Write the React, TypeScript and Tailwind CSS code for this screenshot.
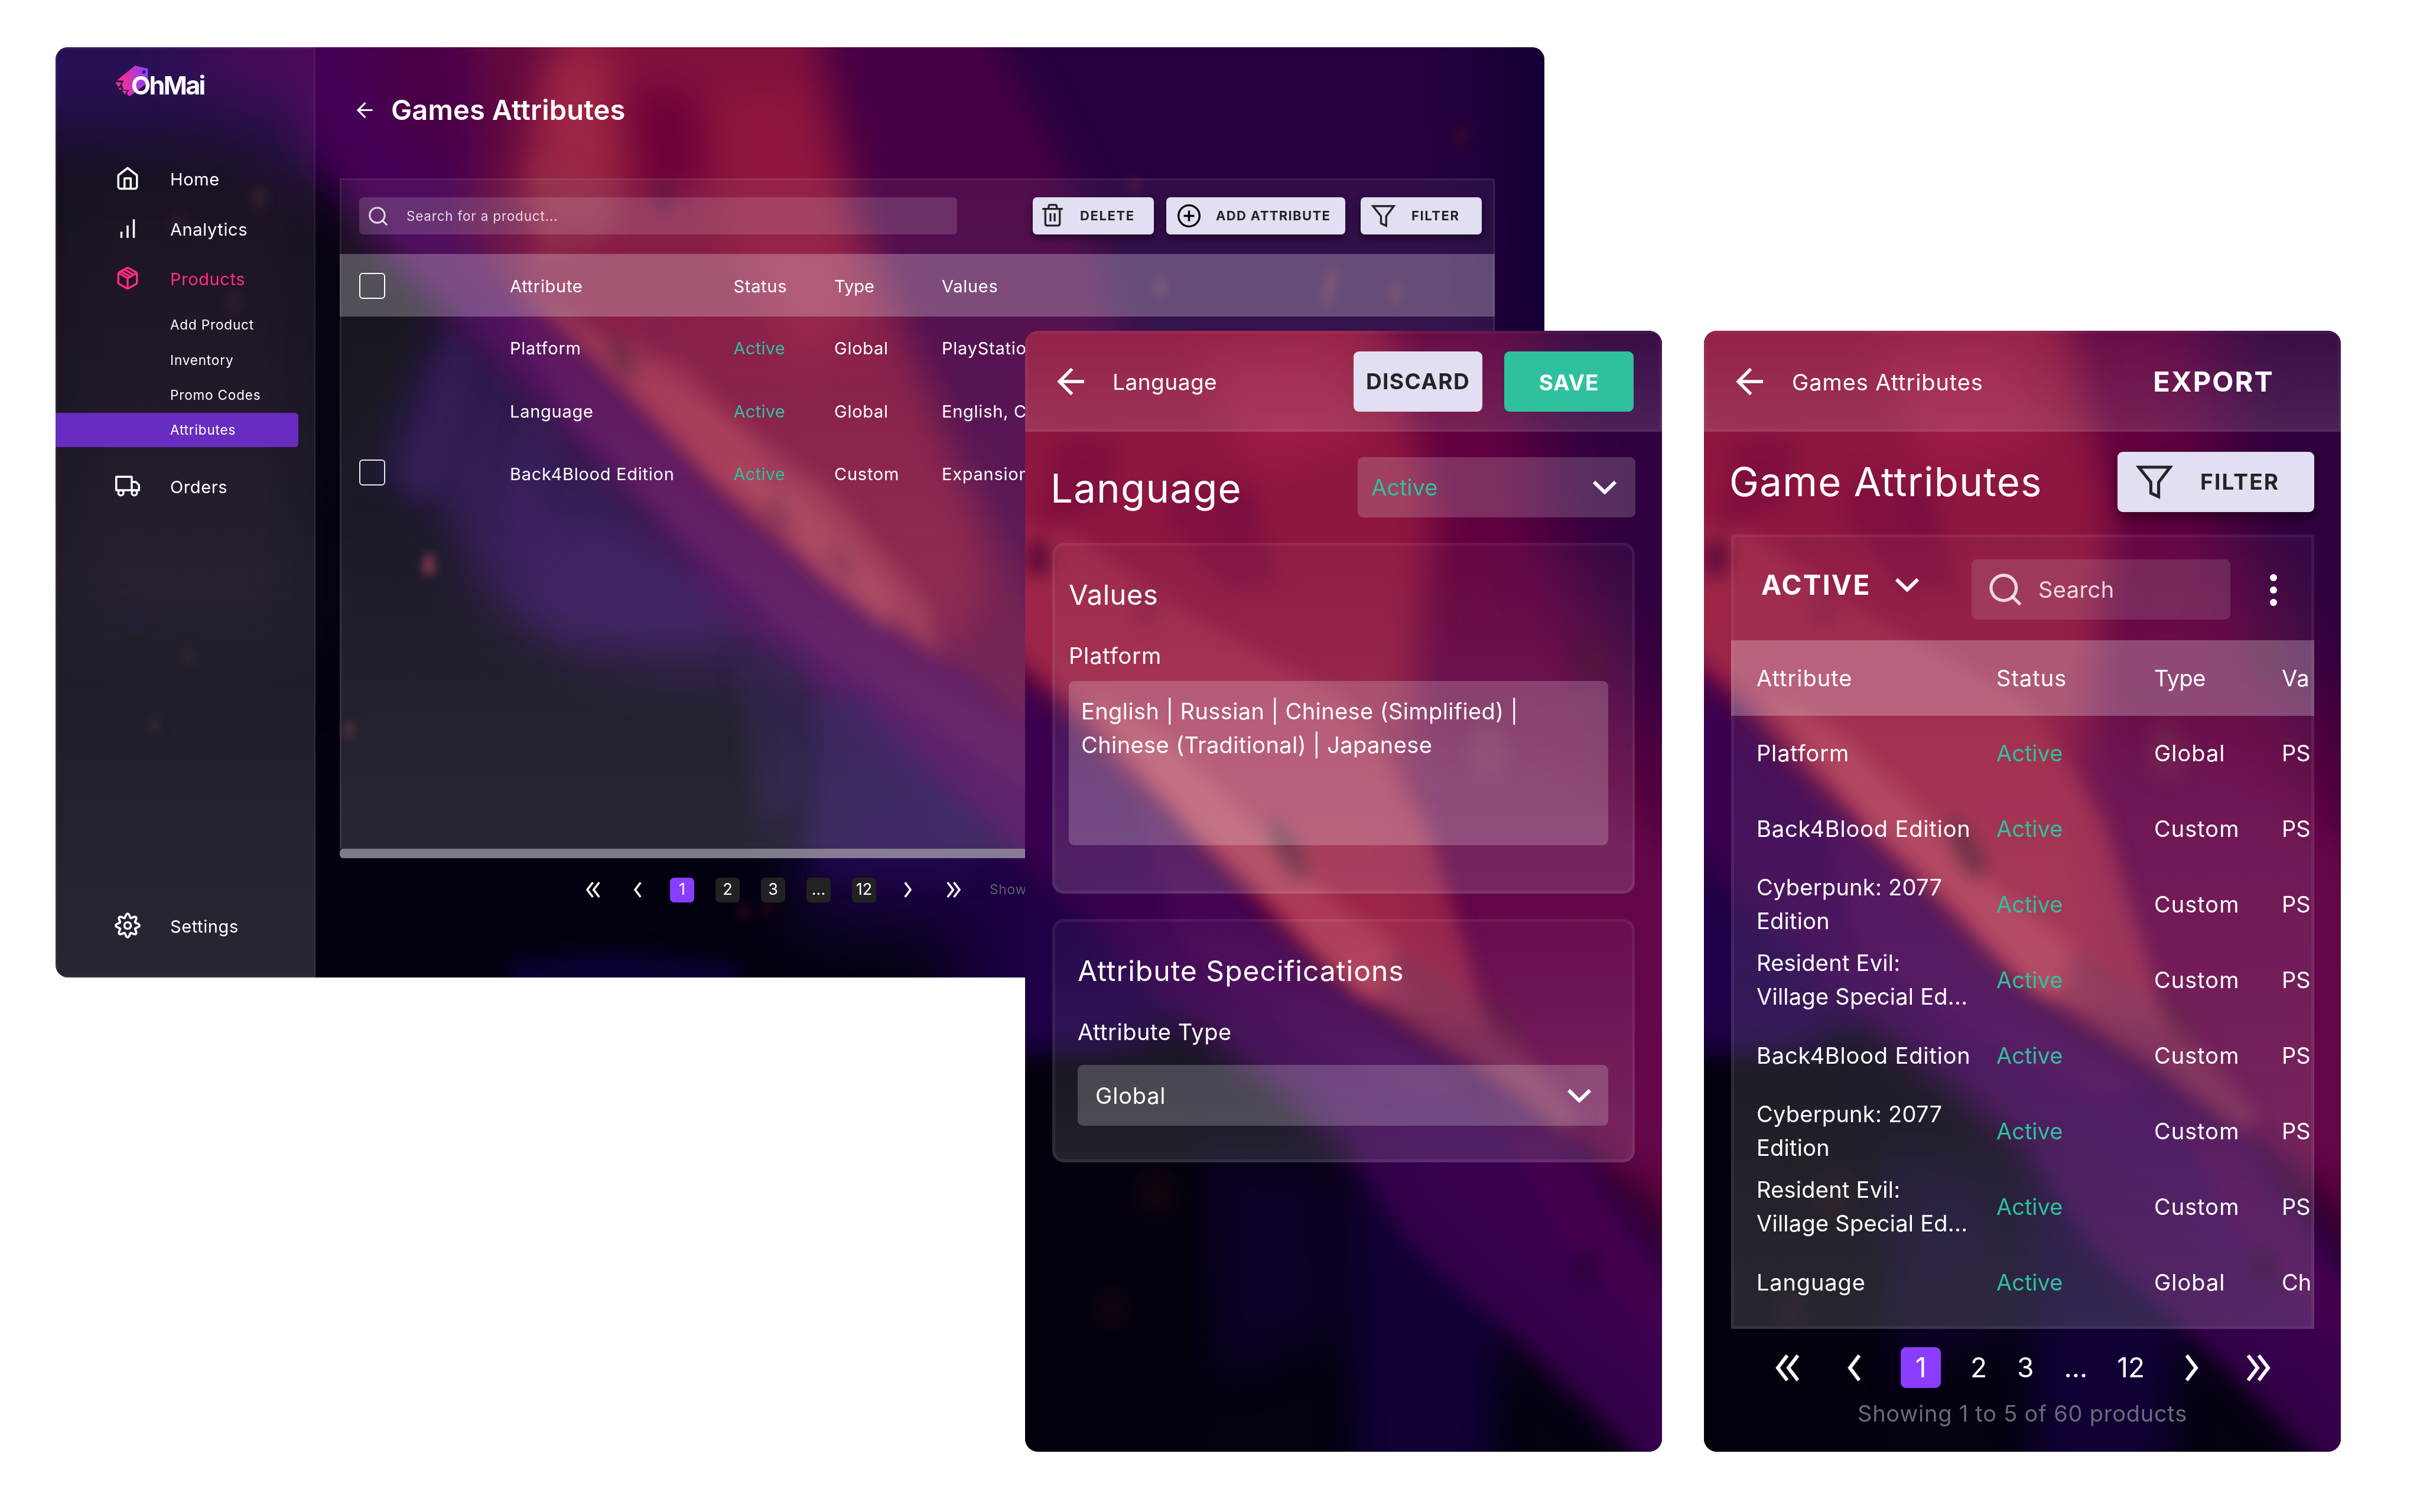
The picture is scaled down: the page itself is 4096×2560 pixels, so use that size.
import React from "react";

type TProps = { className?: string; children: React.ReactNode };

function T({ className = "", children }: TProps) {
  return <span className={"whitespace-nowrap " + className}>{children}</span>;
}

/* ---------- icons ---------- */

type IconProps = { className?: string; sw?: number };

function Line({ className = "", sw = 2, children }: IconProps & { children: React.ReactNode }) {
  return (
    <svg viewBox="0 0 24 24" fill="none" stroke="currentColor" strokeWidth={sw} strokeLinecap="round" strokeLinejoin="round" className={"shrink-0 " + className}>
      {children}
    </svg>
  );
}

const HomeIcon = (p: IconProps) => (
  <Line {...p}>
    <path d="M3 9l9-7 9 7v11a2 2 0 0 1-2 2H5a2 2 0 0 1-2-2z" />
    <path d="M9 22V12h6v10" />
  </Line>
);
const BarsIcon = (p: IconProps) => (
  <Line {...p}>
    <path strokeLinecap="butt" d="M6 21v-6M12 21V9M18 21V3" />
  </Line>
);
const PackageIcon = (p: IconProps) => (
  <Line {...p}>
    <path d="M21 16V8a2 2 0 0 0-1-1.73l-7-4a2 2 0 0 0-2 0l-7 4A2 2 0 0 0 3 8v8a2 2 0 0 0 1 1.73l7 4a2 2 0 0 0 2 0l7-4A2 2 0 0 0 21 16z" />
    <path d="M3.3 7L12 12l8.7-5M12 22V12M6 5.6l8.8 5M9.3 4l8.6 4.6" />
  </Line>
);
const TruckIcon = (p: IconProps) => (
  <Line {...p}>
    <path d="M1 3h15v13H1zM16 8h4l3 3v5h-7z" />
    <circle cx="5.5" cy="18.5" r="2.5" />
    <circle cx="18.5" cy="18.5" r="2.5" />
  </Line>
);
const gearPath =
  Array.from({ length: 96 }, (_, i) => {
    const a = (i / 96) * Math.PI * 2;
    const r = 9.2 + 1.75 * Math.cos(8 * a);
    return `${i ? "L" : "M"}${(12 + r * Math.cos(a)).toFixed(2)} ${(12 + r * Math.sin(a)).toFixed(2)}`;
  }).join("") + "Z";
const GearIcon = (p: IconProps) => (
  <Line {...p}>
    <path d={gearPath} />
    <circle cx="12" cy="12" r="3" />
  </Line>
);
const SearchIcon = (p: IconProps) => (
  <Line {...p}>
    <circle cx="11" cy="11" r="8" />
    <path d="M21 21l-4.35-4.35" />
  </Line>
);
const ArrowIcon = ({ className = "", sw = 3.3 }: IconProps) => (
  <svg viewBox="0 0 28 28" fill="none" stroke="currentColor" strokeWidth={sw} className={"shrink-0 " + className}>
    <path d="M28 14H2M15.5 1L2.5 14l13 13" />
  </svg>
);
const TrashIcon = ({ className = "" }: IconProps) => (
  <svg viewBox="90 70 148 166" fill="none" stroke="currentColor" strokeWidth="14" className={"shrink-0 " + className}>
    <path d="M90 107H238M136 104V90q0-12 12-12h34q12 0 12 12v14M112 110V214q0 13 13 13h78q13 0 13-13V110M149 138V197M179 138V197" />
  </svg>
);
const PlusCircleIcon = ({ className = "" }: IconProps) => (
  <svg viewBox="0 0 162 162" fill="none" stroke="currentColor" strokeWidth="14" className={"shrink-0 " + className}>
    <circle cx="81" cy="81" r="74" />
    <path d="M81 44V118M44 81H118" />
  </svg>
);
const FunnelIcon = ({ className = "", sw = 5 }: IconProps) => (
  <svg viewBox="0 0 60 56" fill="none" stroke="currentColor" strokeWidth={sw} className={"shrink-0 " + className}>
    <path d="M4 3H56L37 28V52L24 46V28Z" />
  </svg>
);
const ChevronDown = ({ className = "" }: IconProps) => (
  <svg viewBox="0 0 42 24" fill="none" stroke="currentColor" strokeWidth="6" className={"shrink-0 " + className}>
    <path d="M3 3L21 20.500L39 3" />
  </svg>
);
const Angle = ({ className = "", double = false, flip = false }: { className?: string; double?: boolean; flip?: boolean }) => (
  <svg viewBox={double ? "0 0 42 52" : "0 0 24 52"} fill="none" stroke="currentColor" strokeWidth="6" className={"shrink-0 " + (flip ? "-scale-x-100 " : "") + className}>
    <path d="M21 5L5 26L21 47" />
    {double && <path d="M39 5L23 26L39 47" />}
  </svg>
);

function Logo() {
  return (
    <div className="relative ml-[101px] mt-[31px] h-[52px] w-[153px]">
      <svg viewBox="72 78 644 220" className="absolute inset-0 h-[52px] w-[153px]">
        <defs>
          <linearGradient id="fish" x1="72" x2="305" y1="0" y2="0" gradientUnits="userSpaceOnUse">
            <stop offset="0.1" stopColor="#ff2d86" />
            <stop offset="1" stopColor="#8b3dff" />
          </linearGradient>
        </defs>
        <path
          fill="url(#fish)"
          fillRule="evenodd"
          d="M213 78L305 100V200L172 299L152 280L170 252L130 252L118 214L132 186L82 184ZM276 112a12 12 0 1 0 .1 0ZM72 198L118 200L94 234ZM94 250L106 232L118 252ZM120 258L156 258L138 286Z"
        />
      </svg>
      <span className="absolute left-[27px] top-[4px] whitespace-nowrap font-[Inter] text-[43px] font-bold leading-[58px] tracking-[-2.600px]">
        OhMai
      </span>
    </div>
  );
}

/* ---------- backdrops ---------- */

function Blurs({ id }: { id: string }) {
  return (
    <defs>
      {[3, 6, 12, 24].map((s) => (
        <filter key={s} id={`${id}${s}`} x="-50%" y="-50%" width="200%" height="200%" colorInterpolationFilters="sRGB">
          <feGaussianBlur stdDeviation={s} />
        </filter>
      ))}
    </defs>
  );
}

function DesktopBackdrop() {
  return (
    <svg viewBox="36 30.5 965 603" preserveAspectRatio="none" className="absolute inset-0 h-full w-full">
      <Blurs id="d" />
      <rect x="36" y="30" width="966" height="604" fill="#03010f" />
      <g filter="url(#d24)">
        <path d="M-20 -20H330V110L230 130L150 85L-20 85Z" fill="#200650" />
        <path d="M130 -20H330V130L240 120L180 60L130 60Z" fill="#430052" />
        <path d="M480 -20H1060V400H900L760 660L560 430Z" fill="#27003f" />
        <path d="M960 -20H1060V300H970Z" fill="#150036" />
        <path d="M36 110H205V420H36Z" fill="#0f0616" />
        <path d="M520 430L640 500L760 560V600H520Z" fill="#1b0545" />
        <path d="M620 540L760 560V680H620Z" fill="#1c0044" />
        <path d="M290 300H380L500 400L520 430L420 430L320 390Z" fill="#2a0852" />
      </g>
      <g filter="url(#d12)">
        <path d="M195 -20H300L345 100L400 200L470 290L560 360L700 440V580L664 556L566 480L466 394L416 332L363 280L280 195L238 154L205 100Z" fill="#460056" />
        <path d="M230 -20H300L300 130L250 80Z" fill="#4a0048" />
        <path d="M300 -20H500L560 60L640 190L720 300V520L664 470L616 433L533 375L465 318L374 222L336 192L300 150L310 100Z" fill="#62083f" />
        <path d="M365 -20H520L560 120L620 240L640 380L616 425L533 370L465 312L380 222L335 188L345 120Z" fill="#80103c" />
        <path d="M520 -20H620L700 130L760 330L700 440L620 300L560 150Z" fill="#480044" />
        <path d="M355 30H395L405 110L380 150L335 130Z" fill="#9c2443" />
        <path d="M405 60H450L455 118L420 125Z" fill="#6c0038" />
        <path d="M465 60H520L560 200L520 240L470 150Z" fill="#90163f" />
        <path d="M210 105L238 160L280 205L262 250L215 330Z" fill="#090510" />
        <path d="M282 210L325 250L362 290L410 340L400 330L340 400L300 330L245 310Z" fill="#1c0742" />
        <path d="M318 322L345 322L400 345L460 395L468 412L420 408L375 418L350 405L335 370Z" fill="#2c0a56" opacity="0.7" />
      </g>
      <g filter="url(#d6)">
        <path d="M337 186L372 205L420 240L480 275L540 320L600 390L610 425L533 372L465 314L374 222Z" fill="#9e304c" opacity="0.75" />
        <path d="M385 215L440 235L490 285L500 335L462 310Z" fill="#a5304e" opacity="0.6" />
        <path d="M345 100L400 120L400 150L350 170Z" fill="#8c2c48" opacity="0.5" />
        <path d="M470 300L520 320L580 385L575 408L533 374Z" fill="#a83a54" opacity="0.7" />
        <path d="M330 200L374 230L462 328L533 386L616 442L680 490V520L600 468L520 415L440 345L370 272Z" fill="#550a54" opacity="0.75" />
        <path d="M290 215L310 230L280 320L262 320Z" fill="#250a48" opacity="0.6" />
        <path d="M340 260L362 285L345 340L325 330Z" fill="#2c0a50" opacity="0.5" />
        <path d="M476 425H520V520L490 535Z" fill="#1b0a40" opacity="0.5" />
        <path d="M526 450H560L640 540V570H526Z" fill="#200a50" opacity="0.5" />
        <path d="M330 622L400 616L480 624V645H330Z" fill="#0c0030" />
        <ellipse cx="403" cy="232" rx="5" ry="15" transform="rotate(-28 403 232)" fill="#521a34" opacity="0.9" />
        <ellipse cx="430" cy="126" rx="6" ry="12" fill="#5c0a38" />
        <ellipse cx="504" cy="334" rx="4" ry="12" transform="rotate(-30 504 334)" fill="#6a2040" />
        <ellipse cx="545" cy="365" rx="4" ry="12" transform="rotate(-30 545 365)" fill="#6a1c44" opacity="0.8" />
        <ellipse cx="426" cy="222" rx="8" ry="10" fill="#74123f" opacity="0.8" />
      </g>
      <g filter="url(#d3)">
        <ellipse cx="278" cy="366" rx="4" ry="7" fill="#6d2236" />
        <ellipse cx="168" cy="128" rx="5" ry="8" fill="#241020" />
        <ellipse cx="115" cy="145" rx="5" ry="7" fill="#1c0c1c" />
        <ellipse cx="152" cy="195" rx="5" ry="7" fill="#1c0d1c" />
        <ellipse cx="88" cy="400" rx="5" ry="9" fill="#0c0420" />
        <ellipse cx="122" cy="425" rx="4" ry="6" fill="#160812" />
        <ellipse cx="100" cy="470" rx="4" ry="6" fill="#160812" />
        <ellipse cx="226" cy="473" rx="4" ry="6" fill="#2c0e1a" />
        <ellipse cx="482" cy="590" rx="4" ry="6" fill="#240414" />
        <ellipse cx="497" cy="588" rx="3" ry="7" fill="#240414" />
        <ellipse cx="862" cy="186" rx="4" ry="13" transform="rotate(10 862 186)" fill="#481038" />
        <ellipse cx="905" cy="190" rx="4" ry="8" fill="#400c38" />
        <ellipse cx="752" cy="186" rx="5" ry="7" fill="#421040" />
        <ellipse cx="947" cy="88" rx="4" ry="8" transform="rotate(25 947 88)" fill="#340630" />
        <ellipse cx="735" cy="120" rx="5" ry="6" fill="#380a3a" />
      </g>
    </svg>
  );
}

function PhoneBackdrop({ id }: { id: string }) {
  return (
    <svg viewBox="0 0 413 727" preserveAspectRatio="none" className="absolute inset-0 h-full w-full">
      <Blurs id={id} />
      <rect width="413" height="727" fill="#040110" />
      <g filter={`url(#${id}24)`}>
        <path d="M-40 -40H460V640L350 520L220 440L80 310L-40 200Z" fill="#62003f" />
        <path d="M325 -60H480V330L400 265L340 130Z" fill="#30003e" />
        <path d="M400 250H480V460L420 440Z" fill="#420040" />
      </g>
      <g filter={`url(#${id}12)`}>
        <path d="M-30 200L28 246L106 328L189 418L295 481L350 520L385 560L450 640V790L378 706L308 640L253 592L214 536L156 486L100 446L45 388L-30 322Z" fill="#3a0050" />
        <path d="M-30 330L50 392L100 448L60 470L-30 470Z" fill="#1f0048" />
        <path d="M210 535L250 592L308 642L300 760H215Z" fill="#100034" />
        <path d="M115 530L200 545L205 650L125 680Z" fill="#0c0024" />
        <path d="M-30 -30H230L265 120L250 250L310 370L290 470L189 410L106 322L64 280L28 240L-30 200Z" fill="#8e1640" />
        <path d="M110 10L200 0L220 70L150 90Z" fill="#9c1c44" />
        <path d="M240 260L330 270L430 340V560L370 530L300 478L260 430Z" fill="#640648" />
      </g>
      <g filter={`url(#${id}6)`}>
        <path d="M-10 125L30 130L100 180L210 240L260 320L285 400L300 455L220 432L150 360L64 280L28 240L-10 205Z" fill="#a22a4a" opacity="0.75" />
        <path d="M40 235L90 262L140 310L190 360L240 400L255 440L215 430L148 360L106 322Z" fill="#b03e58" opacity="0.85" />
        <path d="M240 400L300 440L360 510L350 520L290 475L230 435Z" fill="#7e2850" opacity="0.7" />
        <path d="M100 90L150 110L165 165L130 170L90 120Z" fill="#7c0e3e" opacity="0.7" />
        <path d="M20 70H60L55 110L10 130Z" fill="#760a3c" opacity="0.6" />
        <path d="M70 300L145 372L215 440L290 490L260 500L180 460L100 400Z" fill="#4a0656" opacity="0.7" />
        <path d="M214 530L240 520L320 590L413 690V740L378 706L308 640L253 592Z" fill="#34004a" opacity="0.7" />
        <path d="M300 500L350 530L413 620V660L350 590Z" fill="#4c004c" opacity="0.6" />
        <path d="M-10 475H90L110 540L105 760H-10Z" fill="#04010c" opacity="0.9" />
        <ellipse cx="170" cy="336" rx="7" ry="22" transform="rotate(-28 170 336)" fill="#5c2238" />
        <ellipse cx="308" cy="448" rx="7" ry="20" transform="rotate(-38 308 448)" fill="#561038" opacity="0.65" />
        <ellipse cx="8" cy="147" rx="8" ry="13" fill="#5c0a38" />
        <ellipse cx="300" cy="272" rx="12" ry="20" fill="#6a1a44" opacity="0.6" />
        <ellipse cx="365" cy="212" rx="12" ry="16" fill="#42082e" opacity="0.6" />
        <ellipse cx="78" cy="180" rx="9" ry="14" fill="#8a1e42" opacity="0.8" />
        <ellipse cx="140" cy="115" rx="8" ry="18" fill="#760e40" opacity="0.7" />
        <ellipse cx="56" cy="634" rx="7" ry="11" fill="#140410" />
        <ellipse cx="85" cy="560" rx="12" ry="14" fill="#10040e" />
        <ellipse cx="364" cy="608" rx="11" ry="14" fill="#2c0038" opacity="0.7" />
      </g>
    </svg>
  );
}

/* ---------- desktop window ---------- */

const tableRows = [
  { name: "Platform", type: "Global", values: "PlayStation", box: false },
  { name: "Language", type: "Global", values: "English, Ch", box: false },
  { name: "Back4Blood Edition", type: "Custom", values: "Expansion", box: true },
];

function NavRow({ icon, label, className = "" }: { icon: React.ReactNode; label: string; className?: string }) {
  return (
    <div className={"flex h-[84.400px] shrink-0 items-center gap-[51px] pl-[101px] " + className}>
      {icon}
      <T className="pt-[4px] text-[29px] leading-[40px] tracking-[0.600px]">{label}</T>
    </div>
  );
}

const subRow = "flex h-[59.600px] items-center pl-[194px]";

function Sidebar() {
  return (
    <aside className="flex w-[440px] shrink-0 flex-col border-[3px] border-white/[0.05] bg-linear-to-b from-white/[0.04] to-white/[0.150] bg-origin-border">
      <div className="-ml-[3px] -mt-[3px] flex h-[180px] shrink-0">
        <Logo />
      </div>
      <nav className="-ml-[3px] flex flex-col">
        <NavRow icon={<HomeIcon className="size-[42px]" />} label="Home" />
        <NavRow icon={<BarsIcon className="size-[42px]" />} label="Analytics" />
        <NavRow icon={<PackageIcon className="size-[42px]" />} label="Products" className="text-[#ff2d86]" />
        <div className="mt-[7px] flex flex-col text-[22.500px] tracking-[0.850px]">
          <div className={subRow}><T>Add Product</T></div>
          <div className={subRow}><T>Inventory</T></div>
          <div className={subRow}><T>Promo Codes</T></div>
          <div className="flex h-[58px] w-[411px] items-center rounded-r-[6px] bg-[#682dc0] pl-[194px]"><T>Attributes</T></div>
        </div>
        <NavRow icon={<TruckIcon className="size-[42px]" />} label="Orders" className="mt-[24px]" />
      </nav>
      <div className="-ml-[3px] mb-[43px] mt-auto">
        <NavRow icon={<GearIcon className="-ml-[1px] -mr-[1px] size-[44px]" />} label="Settings" />
      </div>
    </aside>
  );
}

const lightButton =
  "flex h-[63px] items-center rounded-[7px] bg-[#e1dff1] text-[22px] font-bold tracking-[1.600px] text-[#232427] shadow-[0_7px_14px_rgba(0,0,0,0.450)]";
const tableGrid = "-mx-[3px] grid shrink-0 grid-cols-[255px_378.500px_170.500px_182px_1fr] items-center pl-[33px] text-[29px]";

function PageBox({ children, active = false }: { children: React.ReactNode; active?: boolean }) {
  return (
    <span className={"flex h-[42px] w-[41px] items-center justify-center rounded-[7px] text-[27px] " + (active ? "bg-[#8b3dff]" : "bg-[#222225]")}>{children}</span>
  );
}

function DesktopWindow() {
  return (
    <section className="absolute left-[94px] top-[80px] flex h-[1575px] w-[2520px] overflow-hidden rounded-[21px]">
      <DesktopBackdrop />
      <div className="relative flex w-full">
        <Sidebar />
        <main className="flex flex-1 flex-col pl-[41px]">
          <header className="flex h-[222px] shrink-0 items-center gap-[31px] pb-[9px] pl-[28px]">
            <ArrowIcon className="h-[27px] w-[28px]" />
            <T className="mb-[2px] text-[47px] font-semibold leading-[60px] tracking-[0.150px]">Games Attributes</T>
          </header>
          <div className="flex h-[1135px] w-[1955px] flex-col border-x-[3px] border-t-[3px] border-white/[0.07] bg-linear-to-b from-white/[0.05] to-white/[0.150] bg-origin-border">
            <div className="flex h-[124px] shrink-0 items-start pl-[30px] pt-[29px]">
              <div className="flex h-[63px] w-[1012px] items-center rounded-[7px] bg-white/[0.140] pl-[13px] text-white/80">
                <SearchIcon className="size-[38px]" sw={2} />
                <T className="ml-[29px] text-[22.500px] tracking-[0.800px]">Search for a product...</T>
              </div>
              <div className={lightButton + " ml-[128px] w-[205px]"}>
                <TrashIcon className="mb-[3px] ml-[16px] h-[39px] w-[35px]" />
                <T className="ml-[29px]">DELETE</T>
              </div>
              <div className={lightButton + " ml-[21px] w-[303px]"}>
                <PlusCircleIcon className="ml-[19px] size-[39px] text-black" />
                <T className="ml-[26px] tracking-[1.350px]">ADD ATTRIBUTE</T>
              </div>
              <div className={lightButton + " ml-[26px] w-[205px]"}>
                <FunnelIcon className="ml-[18px] h-[38px] w-[41px]" />
                <T className="ml-[27px]">FILTER</T>
              </div>
            </div>
            <div className={tableGrid + " mt-[1px] h-[106px] bg-white/25 tracking-[0.700px]"}>
              <span className="mb-[-1px] size-[44px] rounded-[6px] border-2 border-white" />
              <T className="pt-[4px]">Attribute</T>
              <T className="pt-[4px]">Status</T>
              <T className="pt-[4px] tracking-[0px]">Type</T>
              <T className="pt-[4px]">Values</T>
            </div>
            {tableRows.map((r) => (
              <div key={r.name} className={tableGrid + " h-[106.200px] tracking-[0.750px]"}>
                <span className={r.box ? "-mt-[2px] size-[44px] rounded-[6px] border-2 border-white/90" : ""} />
                <T className="pt-[2px]">{r.name}</T>
                <T className="pt-[2px] tracking-[0.300px] text-[#2fc19d]">Active</T>
                <T className="pt-[2px]">{r.type}</T>
                <T className="pt-[2px]">{r.values}</T>
              </div>
            ))}
          </div>
          <div className="h-[16px] w-[1955px] shrink-0 rounded-[6px] bg-[#a09aa8]/80" />
          <div className="flex h-[107px] items-center pl-[416px]">
            <Angle double className="h-[31px] w-[25px]" />
            <Angle className="ml-[56px] h-[31px] w-[14px]" />
            <div className="ml-[48px] flex gap-[36px]">
              <PageBox active>1</PageBox>
              <PageBox>2</PageBox>
              <PageBox>3</PageBox>
              <PageBox>...</PageBox>
              <PageBox>12</PageBox>
            </div>
            <Angle flip className="ml-[47px] h-[31px] w-[14px]" />
            <Angle double flip className="ml-[58px] h-[31px] w-[25px]" />
            <T className="ml-[48px] text-[23px] tracking-[0.600px] text-[#5f5d6b]">Showing 1 to 5 of 60 products</T>
          </div>
        </main>
      </div>
    </section>
  );
}

/* ---------- phones ---------- */

const card = "flex flex-col rounded-[20px] border-[5px] border-white/[0.060] bg-linear-to-b from-white/[0.03] to-white/[0.130] bg-origin-border";
const phoneHeader = "flex h-[171px] shrink-0 items-center border-[5px] border-white/[0.04] bg-linear-to-b from-white/[0.05] to-white/[0.130] bg-origin-border pl-[49px]";

function LanguagePhone() {
  return (
    <section className="absolute left-[1735px] top-[560px] flex h-[1898px] w-[1078px] overflow-hidden rounded-[22px]">
      <PhoneBackdrop id="p" />
      <div className="relative flex w-full flex-col">
        <header className={phoneHeader}>
          <ArrowIcon className="h-[46px] w-[46px]" />
          <T className="ml-[48px] pt-[2px] text-[37px] leading-[48px] tracking-[0.500px]">Language</T>
          <div className="ml-auto mr-[43px] flex gap-[37px] text-[37px] font-bold">
            <div className="flex h-[102px] w-[218px] items-center justify-center rounded-[9px] bg-[#e1dff1] text-[#232427]"><T className="tracking-[1.400px]">DISCARD</T></div>
            <div className="flex h-[102px] w-[219px] items-center justify-center rounded-[9px] bg-[#2fc09d] pt-[5px]"><T className="tracking-[0.800px]">SAVE</T></div>
          </div>
        </header>
        <div className="mt-[43px] flex items-center justify-between pl-[43px] pr-[45px]">
          <T className="pt-[3px] text-[67px] leading-[80px] tracking-[1.300px]">Language</T>
          <div className="flex h-[102px] w-[470px] items-center justify-between rounded-[9px] bg-white/[0.180] pl-[23px] pr-[31px]">
            <T className="text-[38px] leading-[50px] text-[#2fc19d]">Active</T>
            <ChevronDown className="h-[24px] w-[42px]" />
          </div>
        </div>
        <div className={card + " ml-[46px] mt-[43px] h-[594px] w-[986px] pl-[23px]"}>
          <T className="mt-[53px] text-[47px] leading-[60px] tracking-[0.600px]">Values</T>
          <T className="mt-[49px] text-[38px] leading-[48px] tracking-[0.850px]">Platform</T>
          <div className="mt-[19px] flex h-[278px] w-[913px] flex-col items-start rounded-[9px] bg-white/20 pl-[21px] pt-[23px] text-[38px] leading-[57px] tracking-[0.400px]">
            <T>English | Russian | Chinese (Simplified) |</T>
            <T>Chinese (Traditional) | Japanese</T>
          </div>
        </div>
        <div className={card + " ml-[46px] mt-[43px] h-[412px] w-[986px] pl-[38px]"}>
          <T className="mt-[53px] text-[48px] leading-[60px] tracking-[1px]">Attribute Specifications</T>
          <T className="mt-[49px] text-[38px] leading-[48px] tracking-[0.550px]">Attribute Type</T>
          <div className="mt-[32px] flex h-[103px] w-[898px] items-center justify-between rounded-[9px] bg-white/20 pl-[30px] pr-[28px]">
            <T className="text-[38px] leading-[48px] tracking-[0.800px]">Global</T>
            <ChevronDown className="h-[24px] w-[42px]" />
          </div>
        </div>
      </div>
    </section>
  );
}

const phoneGrid = "-mx-[5px] grid h-[128px] shrink-0 grid-cols-[406px_267px_216px_1fr] items-center pl-[43px]";

const phoneRows: { lines: string[]; type: string; value: string }[] = [
  { lines: ["Platform"], type: "Global", value: "PS" },
  { lines: ["Back4Blood Edition"], type: "Custom", value: "PS" },
  { lines: ["Cyberpunk: 2077", "Edition"], type: "Custom", value: "PS" },
  { lines: ["Resident Evil:", "Village Special Ed..."], type: "Custom", value: "PS" },
  { lines: ["Back4Blood Edition"], type: "Custom", value: "PS" },
  { lines: ["Cyberpunk: 2077", "Edition"], type: "Custom", value: "PS" },
  { lines: ["Resident Evil:", "Village Special Ed..."], type: "Custom", value: "PS" },
  { lines: ["Language"], type: "Global", value: "Ch" },
];

function AttributesPhone() {
  return (
    <section className="absolute left-[2884px] top-[560px] flex h-[1898px] w-[1078px] overflow-hidden rounded-[22px]">
      <PhoneBackdrop id="q" />
      <div className="relative flex w-full flex-col">
        <header className={phoneHeader}>
          <ArrowIcon className="h-[46px] w-[46px]" />
          <T className="ml-[49px] pt-[2px] text-[38px] leading-[48px] tracking-[0.900px]">Games Attributes</T>
          <T className="ml-auto mr-[108px] text-[47px] font-bold leading-[56px] tracking-[2.100px]">EXPORT</T>
        </header>
        <div className="mt-[34px] flex items-center justify-between pl-[43px] pr-[45px]">
          <T className="text-[67px] leading-[80px] tracking-[1.300px]">Game Attributes</T>
          <div className="flex h-[102px] w-[333px] items-center rounded-[9px] bg-[#e1dff1] text-[#232427] shadow-[0_10px_22px_rgba(0,0,0,0.450)]">
            <FunnelIcon className="ml-[31px] h-[57px] w-[63px]" />
            <T className="ml-[46px] text-[37px] font-bold leading-[48px] tracking-[2.200px]">FILTER</T>
          </div>
        </div>
        <div className="ml-[46px] mt-[38px] flex h-[1345px] w-[987px] flex-col border-[5px] border-white/[0.060] bg-linear-to-b from-white/[0.03] to-white/[0.150] bg-origin-border">
          <div className="flex h-[174px] shrink-0 items-start pl-[46px] pt-[37px]">
            <T className="mt-[15px] w-[226px] text-[46px] font-bold leading-[56px] tracking-[2.200px]">ACTIVE</T>
            <ChevronDown className="mt-[31px] h-[24px] w-[42px]" />
            <div className="ml-[88px] flex h-[102px] w-[438px] items-center rounded-[9px] bg-white/[0.120] pl-[25px] text-white/80">
              <SearchIcon className="size-[64px]" />
              <T className="ml-[24px] text-[38px] leading-[48px] tracking-[0.400px]">Search</T>
            </div>
            <div className="ml-[67px] flex flex-col gap-[9px] pt-[25px]">
              <span className="size-[12px] rounded-full bg-white" />
              <span className="size-[12px] rounded-full bg-white" />
              <span className="size-[12px] rounded-full bg-white" />
            </div>
          </div>
          <div className={phoneGrid + " bg-white/25 text-[38px] tracking-[1px]"}>
            <T>Attribute</T>
            <T>Status</T>
            <T className="tracking-[-0.500px]">Type</T>
            <T>Va</T>
          </div>
          {phoneRows.map((r, i) => (
            <div key={i} className={phoneGrid + " pb-[2px] text-[38px] leading-[57px]"}>
              <div className={"flex flex-col items-start " + (r.lines.length > 1 ? "tracking-[0.250px]" : "tracking-[0.850px]")}>
                {r.lines.map((l) => (
                  <T key={l}>{l}</T>
                ))}
              </div>
              <T className="text-[#2fc19d]">Active</T>
              <T className="tracking-[1px]">{r.type}</T>
              <T>{r.value}</T>
            </div>
          ))}
        </div>
        <div className="mt-[31px] flex h-[69px] shrink-0 items-center pl-[120px] text-[46px]">
          <Angle double className="h-[58px] w-[42px]" />
          <Angle className="ml-[80px] h-[58px] w-[24px]" />
          <span className="ml-[67px] flex h-[69px] w-[68px] items-center justify-center rounded-[9px] bg-[#8b3dff]">1</span>
          <span className="ml-[50px]">2</span>
          <span className="ml-[51px]">3</span>
          <span className="ml-[51px]">...</span>
          <span className="ml-[50px]">12</span>
          <Angle flip className="ml-auto h-[58px] w-[24px]" />
          <Angle double flip className="ml-[80px] mr-[118px] h-[58px] w-[42px]" />
        </div>
        <div className="mt-[15px] flex justify-center text-[38px] leading-[56px] tracking-[0.750px] text-[#6c6a78]">
          <T>Showing 1 to 5 of 60 products</T>
        </div>
      </div>
    </section>
  );
}

export default function App() {
  return (
    <div className="relative h-[2560px] w-[4096px] overflow-hidden bg-white font-[Inter,sans-serif] text-white">
      <DesktopWindow />
      <LanguagePhone />
      <AttributesPhone />
    </div>
  );
}
